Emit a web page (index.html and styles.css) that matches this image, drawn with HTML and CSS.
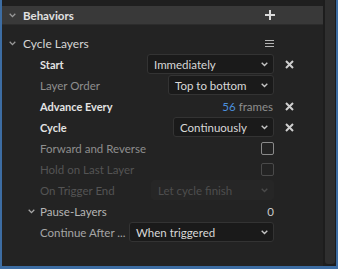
FILE: index.html
```html
<!DOCTYPE html>
<html lang="en">
<head>
    <meta charset="UTF-8">
    <title>Behaviors</title>
    <link rel="stylesheet" href="styles.css">
</head>
<body>
    <div class="frame">
        <div class="panel">
            <div class="top-strip"></div>

            <div class="section-bar">
                <span class="twisty"><svg width="7" height="5" viewBox="0 0 7 5"><path d="M0.7 0.8 L3.5 3.6 L6.3 0.8" fill="none" stroke="#9a9a9a" stroke-width="1.3"/></svg></span>
                <span class="section-title">Behaviors</span>
                <svg class="plus" width="10" height="10" viewBox="0 0 10 10"><path d="M5 0 V10 M0 5 H10" stroke="#dcdcdc" stroke-width="2"/></svg>
            </div>

            <div class="group-head">
                <span class="twisty"><svg width="7" height="5" viewBox="0 0 7 5"><path d="M0.7 0.8 L3.5 3.6 L6.3 0.8" fill="none" stroke="#9a9a9a" stroke-width="1.3"/></svg></span>
                <span class="group-title">Cycle Layers</span>
                <svg class="menu" width="9" height="7" viewBox="0 0 9 7"><path d="M0 0.5 H9 M0 3.5 H9 M0 6.5 H9" stroke="#b4b4b4" stroke-width="1"/></svg>
            </div>

            <div class="row">
                <span class="label strong">Start</span>
                <div class="select sel-start">
                    <span>Immediately</span>
                    <svg class="caret" width="7" height="5" viewBox="0 0 7 5"><path d="M0.7 0.8 L3.5 3.6 L6.3 0.8" fill="none" stroke="#c4c4c4" stroke-width="1.4"/></svg>
                </div>
                <div class="action"><svg width="9" height="9" viewBox="0 0 9 9"><path d="M1 1 L8 8 M8 1 L1 8" stroke="#cfcfcf" stroke-width="2"/></svg></div>
            </div>

            <div class="row">
                <span class="label muted">Layer Order</span>
                <div class="select sel-order">
                    <span>Top to bottom</span>
                    <svg class="caret" width="7" height="5" viewBox="0 0 7 5"><path d="M0.7 0.8 L3.5 3.6 L6.3 0.8" fill="none" stroke="#c4c4c4" stroke-width="1.4"/></svg>
                </div>
                <div class="action"></div>
            </div>

            <div class="row">
                <span class="label strong">Advance Every</span>
                <span class="value"><span class="num">56</span> frames</span>
                <div class="action"><svg width="9" height="9" viewBox="0 0 9 9"><path d="M1 1 L8 8 M8 1 L1 8" stroke="#cfcfcf" stroke-width="2"/></svg></div>
            </div>

            <div class="row">
                <span class="label strong">Cycle</span>
                <div class="select sel-cycle">
                    <span>Continuously</span>
                    <svg class="caret" width="7" height="5" viewBox="0 0 7 5"><path d="M0.7 0.8 L3.5 3.6 L6.3 0.8" fill="none" stroke="#c4c4c4" stroke-width="1.4"/></svg>
                </div>
                <div class="action"><svg width="9" height="9" viewBox="0 0 9 9"><path d="M1 1 L8 8 M8 1 L1 8" stroke="#cfcfcf" stroke-width="2"/></svg></div>
            </div>

            <div class="row">
                <span class="label muted">Forward and Reverse</span>
                <span class="checkbox"></span>
                <div class="action"></div>
            </div>

            <div class="row">
                <span class="label disabled">Hold on Last Layer</span>
                <span class="checkbox off"></span>
                <div class="action"></div>
            </div>

            <div class="row">
                <span class="label disabled">On Trigger End</span>
                <div class="select sel-trigger off">
                    <span>Let cycle finish</span>
                    <svg class="caret" width="7" height="5" viewBox="0 0 7 5"><path d="M0.7 0.8 L3.5 3.6 L6.3 0.8" fill="none" stroke="#4a4a4a" stroke-width="1.4"/></svg>
                </div>
                <div class="action"></div>
            </div>

            <div class="row sub-head">
                <span class="twisty small"><svg width="7" height="5" viewBox="0 0 7 5"><path d="M0.7 0.8 L3.5 3.6 L6.3 0.8" fill="none" stroke="#a8a8a8" stroke-width="1.3"/></svg></span>
                <span class="label sub">Pause-Layers</span>
                <span class="count">0</span>
                <div class="action"></div>
            </div>

            <div class="row">
                <span class="label soft">Continue After ...</span>
                <div class="select sel-continue">
                    <span>When triggered</span>
                    <svg class="caret" width="7" height="5" viewBox="0 0 7 5"><path d="M0.7 0.8 L3.5 3.6 L6.3 0.8" fill="none" stroke="#c4c4c4" stroke-width="1.4"/></svg>
                </div>
                <div class="action"></div>
            </div>
        </div>
        <div class="scrollbar"></div>
    </div>
</body>
</html>
```

FILE: styles.css
```css
body {
    margin: 0;
    padding: 0;
    background-color: #232323;
    font-family: Lato, "Open Sans", sans-serif;
    font-size: 11.5px;
}
.frame {
    width: 338px;
    height: 269px;
    box-sizing: border-box;
    border-left: 2px solid #3d6da3;
    border-right: 2px solid #3d6da3;
    border-bottom: 3px solid #3d6da3;
    display: flex;
    background-color: #1d1d1d;
}
.panel {
    width: 321px;
    background-color: #232323;
}
.scrollbar {
    width: 10px;
    margin-left: 2px;
    margin-bottom: 2px;
    background-color: #2f2f2f;
    border-radius: 0 0 3px 3px;
}
.top-strip {
    height: 6px;
    background-color: #1f1f1f;
}
.section-bar {
    height: 18px;
    display: flex;
    align-items: center;
    background-color: #393939;
    border-bottom: 1px solid #2c2c2c;
}
.twisty {
    width: 21px;
    display: flex;
    justify-content: center;
}
.section-title {
    flex: 1;
    color: #e2e2e2;
    font-weight: bold;
}
.plus {
    margin-right: 48px;
}
.group-head {
    height: 22px;
    margin-top: 7px;
    display: flex;
    align-items: center;
}
.group-title {
    flex: 1;
    color: #d6d6d6;
    font-size: 12px;
}
.menu {
    margin-right: 49px;
}
.row {
    height: 21px;
    display: flex;
    align-items: center;
    padding-left: 38px;
}
.label {
    flex: 1;
    white-space: nowrap;
}
.strong {
    color: #e4e4e4;
    font-weight: bold;
    font-size: 11px;
}
.muted {
    color: #8e8e8e;
}
.disabled {
    color: #545454;
}
.sub {
    color: #b6b6b6;
}
.soft {
    color: #a6a6a6;
}
.select {
    height: 20px;
    align-self: flex-start;
    box-sizing: border-box;
    border: 1px solid #333333;
    border-radius: 3px;
    background-color: #1a1a1a;
    color: #d8d8d8;
    display: flex;
    align-items: center;
    justify-content: space-between;
    padding: 0 5px 0 6px;
}
.select.off {
    background-color: #262626;
    border-color: #262626;
    color: #4e4e4e;
}
.sel-start { width: 127px; }
.sel-order { width: 106px; }
.sel-cycle { width: 101px; }
.sel-trigger { width: 123px; }
.sel-continue { width: 145px; }
.action {
    width: 49px;
    display: flex;
    align-items: center;
    padding-left: 11px;
    box-sizing: border-box;
}
.value {
    color: #8e8e8e;
    margin-right: 1px;
}
.num {
    color: #4b8fdd;
}
.checkbox {
    width: 13px;
    height: 13px;
    box-sizing: border-box;
    border: 1.5px solid #8a8a8a;
    border-radius: 2px;
}
.checkbox.off {
    border-color: #4a4a4a;
}
.sub-head {
    padding-left: 20px;
}
.twisty.small {
    width: 18px;
}
.count {
    color: #cacaca;
}
```
